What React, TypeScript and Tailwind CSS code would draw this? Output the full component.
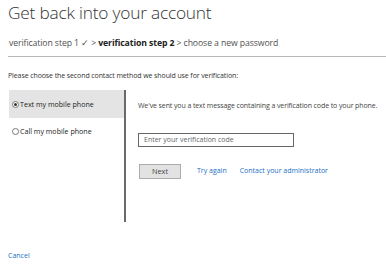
import React from "react";

export default function App() {
  const f = { fontFamily: '"Open Sans", "Noto Sans", Arial, sans-serif' };
  return (
    <div className="w-[386px] h-[269px] bg-white overflow-hidden flex flex-col" style={f}>
      <div className="pl-[8px] pt-[1px] h-[25px] text-[17.3px] leading-[24px] font-light text-[#333] tracking-[-0.2px]">
        Get back into your account
      </div>
      <div className="pl-[9px] mt-[12px] h-[12px] text-[8.7px] leading-[12px] text-[#505050] tracking-[-0.1px] whitespace-nowrap">
        verification step 1 ✓ &gt; <span className="font-bold text-[#222]">verification step 2</span> &gt; choose a new password
      </div>
      <div className="ml-[8px] mt-[7px] border-t border-[#b8b8b8]" />
      <div className="pl-[8px] mt-[14px] h-[10px] text-[7px] leading-[10px] text-[#333] tracking-[-0.1px] whitespace-nowrap">
        Please choose the second contact method we should use for verification:
      </div>
      <div className="flex mt-[9px] h-[132px]">
        <div className="ml-[9px] w-[115px] flex flex-col">
          <div className="h-[28px] bg-[#e4e4e4] flex items-center pl-[3px] text-[7.1px] text-[#222] whitespace-nowrap">
            <span className="w-[7px] h-[7px] rounded-full border border-[#777] bg-white flex items-center justify-center mr-[1px]">
              <span className="w-[3px] h-[3px] rounded-full bg-[#333]" />
            </span>
            Text my mobile phone
          </div>
          <div className="h-[26px] flex items-center pl-[3px] text-[7.1px] text-[#222] whitespace-nowrap">
            <span className="w-[7px] h-[7px] rounded-full border border-[#777] bg-white mr-[1px]" />
            Call my mobile phone
          </div>
        </div>
        <div className="w-[2px] bg-[#6a6a6a]" />
        <div className="pl-[12px] flex flex-col">
          <div className="mt-[11px] h-[10px] text-[7px] leading-[10px] text-[#444] tracking-[-0.1px] whitespace-nowrap">
            We've sent you a text message containing a verification code to your phone.
          </div>
          <div className="mt-[22px] w-[156px] h-[14px] border border-[#666] flex items-center pl-[5px] text-[7px] text-[#666] whitespace-nowrap">
            Enter your verification code
          </div>
          <div className="mt-[17px] flex items-center whitespace-nowrap">
            <div className="ml-[1px] w-[42px] h-[15px] bg-[#e2e2e2] border border-[#acacac] flex items-center justify-center text-[7.3px] text-[#444]">
              Next
            </div>
            <span className="ml-[16px] text-[7px] text-[#1a6fc4]">Try again</span>
            <span className="ml-[13px] text-[7px] text-[#1a6fc4]">Contact your administrator</span>
          </div>
        </div>
      </div>
      <div className="pl-[8px] mt-[29px] text-[7px] leading-[10px] text-[#1a6fc4]">Cancel</div>
    </div>
  );
}
